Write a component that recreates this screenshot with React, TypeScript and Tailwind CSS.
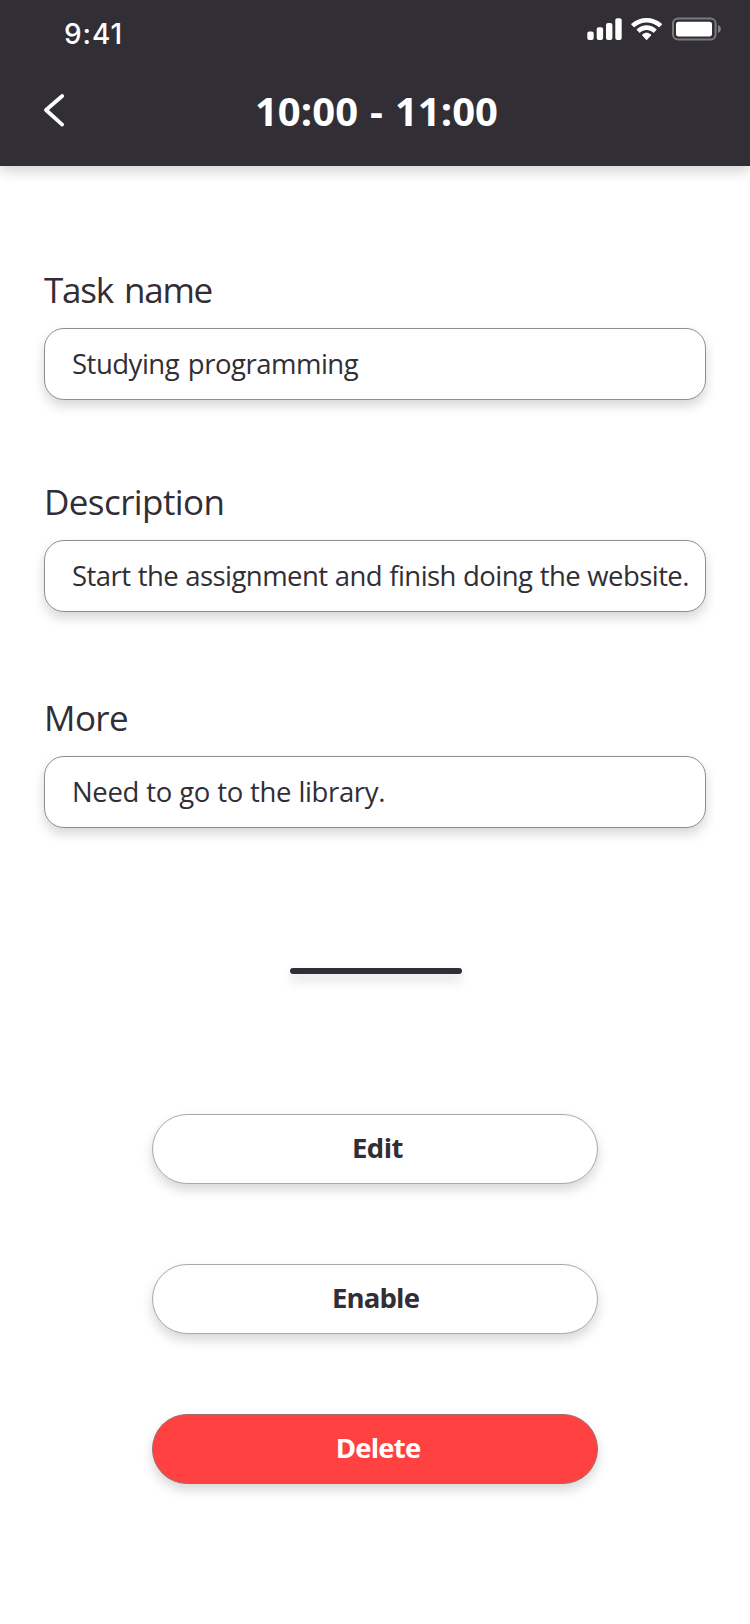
function StatusIcons() {
  return (
    <svg className="mb-[9px] h-6 w-[138px]" viewBox="586 17 138 24" fill="#fff">
      <rect x="587.3" y="31.5" width="6.4" height="8.5" rx="2" />
      <rect x="596.7" y="27.3" width="6.4" height="12.7" rx="2" />
      <rect x="606" y="23" width="6.4" height="17" rx="2" />
      <rect x="615.3" y="18.2" width="6.4" height="21.8" rx="2" />
      <g transform="translate(631.2 18) scale(1.8 1.784)">
        <path d="M8.5713 2.46628C11.0584 2.46639 13.4504 3.38847 15.2529 5.04195C15.3887 5.16963 15.6056 5.16802 15.7393 5.03834L17.0368 3.77487C17.1045 3.70911 17.1422 3.62004 17.1417 3.52735C17.1411 3.43467 17.1023 3.34603 17.0338 3.28104C12.3028 -1.09368 4.83907 -1.09368 0.108056 3.28104C0.0395 3.34598 0.0006 3.4346 0 3.52728C-0.0006 3.61996 0.037 3.70906 0.1047 3.77487L1.40255 5.03834C1.53615 5.16822 1.75327 5.16983 1.88893 5.04195C3.69167 3.38836 6.08395 2.46628 8.5713 2.46628Z" />
        <path d="M8.568 6.68656C9.92527 6.68647 11.2341 7.19821 12.2403 8.12234C12.3763 8.25347 12.5907 8.25063 12.7234 8.11594L14.0106 6.79C14.0784 6.72 14.116 6.63 14.115 6.54C14.114 6.44 14.074 6.35 14.0041 6.28C10.94 3.39 6.2 3.39 3.1358 6.28C3.0658 6.35 3.0258 6.44 3.025 6.54C3.024 6.63 3.062 6.72 3.13 6.79L4.4167 8.11594C4.5494 8.25 4.7638 8.25347 4.8999 8.12234C5.9053 7.199 7.212 6.68656 8.568 6.68656Z" />
        <path d="M11.0924 9.48011C11.0943 9.58546 11.0572 9.68703 10.9899 9.76084L8.81327 12.2156C8.74946 12.2877 8.66247 12.3283 8.5717 12.3283C8.48093 12.3283 8.39394 12.2877 8.33013 12.2156L6.15314 9.76084C6.0859 9.68697 6.04889 9.58537 6.05085 9.48002C6.05281 9.37467 6.09356 9.27512 6.16348 9.20486C7.55371 7.89488 9.58969 7.89488 10.9799 9.20486C11.0498 9.27517 11.0904 9.37476 11.0924 9.48011Z" />
      </g>
      <rect x="673" y="18.5" width="42.6" height="21" rx="5" fill="none" stroke="#fff" strokeOpacity="0.36" strokeWidth="2" />
      <rect x="676" y="21.7" width="36" height="14.7" rx="2.6" />
      <path d="M718 25v8c1.8-.7 2.8-2.2 2.8-4s-1-3.3-2.8-4Z" fillOpacity="0.4" />
    </svg>
  );
}

const fields = [
  { label: "Task name", value: "Studying programming", box: "mt-[100px]", ls: "tracking-[-1.2px] [word-spacing:3px]", vs: "tracking-[-0.49px] [word-spacing:2px]" },
  { label: "Description", value: "Start the assignment and finish doing the website.", box: "mt-[78px]", ls: "tracking-[-0.59px]", vs: "tracking-[-0.56px] [word-spacing:0.65px]" },
  { label: "More", value: "Need to go to the library.", box: "mt-[82px]", ls: "tracking-[-0.6px]", vs: "tracking-[-0.36px] [word-spacing:0.5px]" },
];

const actions = [
  { label: "Edit", style: "border-[#a9a9a9] bg-white pl-[5px] tracking-[-0.5px]" },
  { label: "Enable", style: "border-[#a9a9a9] bg-white pl-px tracking-[-0.84px]" },
  { label: "Delete", style: "border-[#a16a6c] bg-[#ff4141] pl-[6px] text-white tracking-[-0.78px]" },
];

export default function App() {
  return (
    <div className="flex h-[1624px] w-[750px] flex-col overflow-hidden bg-white font-['Open_Sans','Noto_Sans',sans-serif] text-[#312e35]">
      <header className="h-[166px] shrink-0 bg-[#312e35] text-white shadow-[0_6px_12px_rgba(0,0,0,0.16)]">
        <div className="flex h-[66px] items-center justify-between pr-[26px] pl-16">
          <span className="pt-px font-['Inter',sans-serif] text-[28px] leading-none font-medium tracking-[0.9px]">9:41</span>
          <StatusIcons />
        </div>
        <div className="grid h-[89px] grid-cols-[120px_1fr_120px] items-center">
          <button aria-label="Back" className="pb-px pl-[42px]">
            <svg className="h-9 w-6" viewBox="0 0 24 36" fill="none" stroke="#fff" strokeWidth="3.8" strokeLinecap="round" strokeLinejoin="round">
              <path d="M20.2 4 4 18 20.2 32.6" />
            </svg>
          </button>
          <h1 className="pl-[3px] text-center text-[40px] leading-none font-bold tracking-[0.05px] [word-spacing:1.5px]">10:00 - 11:00</h1>
        </div>
      </header>

      <main className="flex flex-col">
        {fields.map((f) => (
          <label key={f.label} className={`mx-11 flex flex-col gap-[14px] ${f.box}`}>
            <span className={`text-[35px] leading-[48px] ${f.ls}`}>{f.label}</span>
            <span className={`flex h-[72px] items-center rounded-[20px] border border-[#8f8f8f] bg-white pl-[27px] text-[27.5px] leading-10 whitespace-nowrap shadow-[0_6px_12px_rgba(0,0,0,0.16)] ${f.vs}`}>
              {f.value}
            </span>
          </label>
        ))}

        <div className="mt-[140px] ml-[290px] h-1.5 w-[172px] rounded-full bg-[#312e35] shadow-[0_6px_12px_rgba(0,0,0,0.16)]" />

        <div className="mt-[140px] flex flex-col items-center gap-20">
          {actions.map((a) => (
            <button
              key={a.label}
              className={`flex h-[70px] w-[446px] items-center justify-center rounded-full border pb-[3px] text-[27.5px] leading-10 font-bold shadow-[0_6px_12px_rgba(0,0,0,0.16)] ${a.style}`}
            >
              {a.label}
            </button>
          ))}
        </div>
      </main>
    </div>
  );
}
